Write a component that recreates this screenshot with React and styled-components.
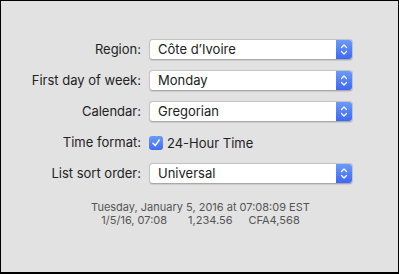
import styled, { createGlobalStyle } from 'styled-components';

const GlobalStyle = createGlobalStyle`
  html, body {
    margin: 0;
    padding: 0;
    background: #e2e2e2;
  }
`;

const Frame = styled.div`
  width: 399px;
  height: 274px;
  box-sizing: border-box;
  border: 1px solid #000;
  border-bottom-width: 2px;
  background: #e2e2e2;
  font-family: Inter, 'Liberation Sans', sans-serif;
  color: #222;
  padding-top: 38px;
`;

const Form = styled.div`
  display: grid;
  grid-template-columns: 140px 204px;
  column-gap: 8px;
  row-gap: 10px;
  align-items: center;
`;

const Label = styled.div`
  text-align: right;
  font-size: 13px;
  line-height: 21px;
  white-space: nowrap;
`;

const Popup = styled.div`
  display: flex;
  height: 21px;
  box-sizing: border-box;
  background: #fff;
  border: 1px solid #c4c4c4;
  border-bottom-color: #a9a9a9;
  border-radius: 4px;
  overflow: hidden;
  box-shadow: 0 0.5px 1px rgba(0, 0, 0, 0.1);
`;

const PopupText = styled.div`
  flex: 1;
  padding-left: 8px;
  font-size: 13px;
  line-height: 19px;
`;

const Stepper = styled.div`
  width: 16px;
  display: flex;
  align-items: center;
  justify-content: center;
  background: linear-gradient(#6a9bf8, #3e68f5);
`;

const CheckRow = styled.label`
  display: flex;
  align-items: center;
  gap: 4px;
  height: 21px;
  font-size: 13px;
`;

const CheckBox = styled.span`
  width: 14px;
  height: 14px;
  border-radius: 3px;
  background: linear-gradient(#6a9bf8, #3f6cf5);
  display: flex;
  align-items: center;
  justify-content: center;
`;

const Footer = styled.div`
  margin-top: 17px;
  text-align: center;
  font-size: 11px;
  line-height: 13px;
  color: #555;
  padding-left: 2px;
`;

const Sample = styled.span`
  margin: 0 ${(p) => p.$right}px 0 ${(p) => p.$left}px;
`;

function Chevrons() {
  return (
    <svg width="8" height="13" viewBox="0 0 8 13">
      <path d="M1.5 4.5 L4 2 L6.5 4.5 M1.5 8.5 L4 11 L6.5 8.5" fill="none" stroke="#fff" strokeWidth="1.3" strokeLinecap="round" strokeLinejoin="round" />
    </svg>
  );
}

function Select({ value }) {
  return (
    <Popup>
      <PopupText>{value}</PopupText>
      <Stepper>
        <Chevrons />
      </Stepper>
    </Popup>
  );
}

export default function App() {
  return (
    <>
      <GlobalStyle />
      <Frame>
        <Form>
          <Label>Region:</Label>
          <Select value="Côte d’Ivoire" />
          <Label>First day of week:</Label>
          <Select value="Monday" />
          <Label>Calendar:</Label>
          <Select value="Gregorian" />
          <Label>Time format:</Label>
          <CheckRow>
            <CheckBox>
              <svg width="10" height="10" viewBox="0 0 10 10">
                <path d="M2 5.2 L4.2 7.6 L8.2 2" fill="none" stroke="#fff" strokeWidth="1.5" strokeLinecap="round" strokeLinejoin="round" />
              </svg>
            </CheckBox>
            24-Hour Time
          </CheckRow>
          <Label>List sort order:</Label>
          <Select value="Universal" />
        </Form>
        <Footer>
          <div>Tuesday, January 5, 2016 at 07:08:09 EST</div>
          <div>
            1/5/16, 07:08<Sample $left={21} $right={16}>1,234.56</Sample>CFA4,568
          </div>
        </Footer>
      </Frame>
    </>
  );
}
